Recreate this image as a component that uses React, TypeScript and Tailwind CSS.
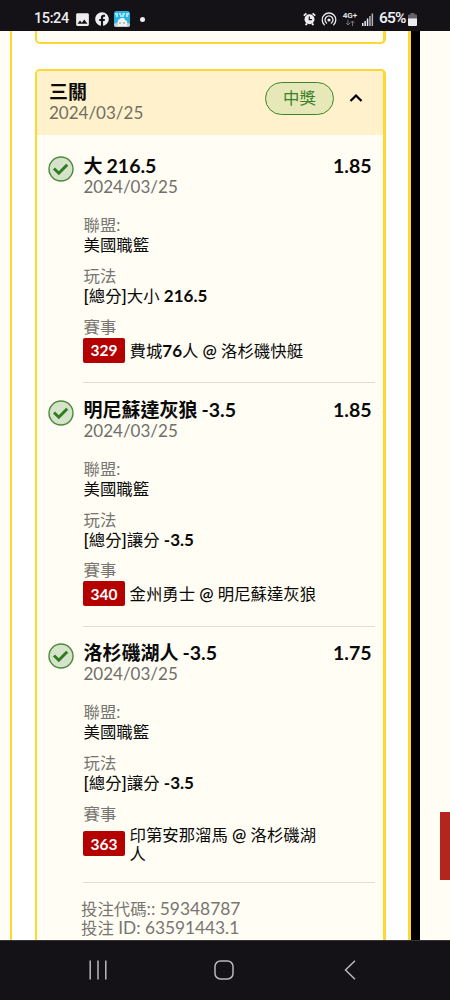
import { FaFacebook } from "react-icons/fa"
import { MdImage } from "react-icons/md"

interface Bet {
  title: string
  line: string
  odds: string
  date: string
  league: string
  play: string
  code: string
  match: string
}

const bets: Bet[] = [
  { title: "大", line: "216.5", odds: "1.85", date: "2024/03/25", league: "美國職籃", play: "[總分]大小 216.5", code: "329", match: "費城76人 @ 洛杉磯快艇" },
  { title: "明尼蘇達灰狼", line: "-3.5", odds: "1.85", date: "2024/03/25", league: "美國職籃", play: "[總分]讓分 -3.5", code: "340", match: "金州勇士 @ 明尼蘇達灰狼" },
  { title: "洛杉磯湖人", line: "-3.5", odds: "1.75", date: "2024/03/25", league: "美國職籃", play: "[總分]讓分 -3.5", code: "363", match: "印第安那溜馬 @ 洛杉磯湖人" },
]

// Latin runs are heavier than the Chinese text around them, numbers most of all
function Mixed({ text }: { text: string }) {
  return (
    <>
      {text.split(/([\x21-\x7e]+)/).map((part, i) => {
        if (i % 2 === 0) return part
        const weight = /\d/.test(part) ? "font-bold" : "font-semibold"
        return <span key={i} className={`text-[17px] leading-none ${weight}`}>{part}</span>
      })}
    </>
  )
}

function StatusBar() {
  return (
    <header className="flex h-[31px] shrink-0 items-center bg-[#141117] pt-[7px] pr-[33px] pl-[34px] text-[#ededf0]">
      <span className="w-[41px] font-['Roboto',sans-serif] text-[14.500px] leading-none font-medium tracking-[-0.400px]">15:24</span>
      <MdImage size={17} className="-ml-[1px]" />
      <FaFacebook size={14} className="ml-[4px]" />
      <svg width="16" height="16" viewBox="0 0 16 16" className="ml-[5px]">
        <rect width="16" height="16" rx="2.5" fill="#28b5e3" />
        <path d="M1 3h3M5 3h2M8.500 3h2.500M12 3h3M2 5h2M6 5h4M12 5h2" stroke="#d8f4fb" strokeWidth="1.300" />
        <path d="M0 13l4-2h8l4 2v.5A2.500 2.500 0 0 1 13.500 16h-11A2.500 2.500 0 0 1 0 13.500z" fill="#c9cfd0" />
        <path d="M4 9l2-1 1-1h3l1 2 2 1v5H3.500z" fill="#f1f3f2" />
        <path d="M5 12h2M9 12h2" stroke="#859398" />
      </svg>
      <span className="ml-[10px] size-[5px] rounded-full bg-[#ededf0]" />
      <div className="ml-auto flex items-center">
        <svg width="13" height="14" viewBox="0 0 13 14" fill="none">
          <circle cx="6.500" cy="7.300" r="5" fill="#ededf0" />
          <path d="M.8 3.600 3.400 1.300M12.200 3.600 9.600 1.300M2.500 13l1.500-1.500M10.500 13 9 11.500" stroke="#ededf0" strokeWidth="1.800" />
          <path d="M6.300 4.500v3.200H9" stroke="#141117" strokeWidth="1.200" />
        </svg>
        <svg width="16" height="14" viewBox="0 0 16 14" fill="none" stroke="#ededf0" strokeWidth="1.300" strokeLinecap="round" className="ml-[5px]">
          <circle cx="8" cy="8" r="1.600" fill="#ededf0" stroke="none" />
          <path d="M5.600 11.100a4 4 0 1 1 4.800 0" />
          <path d="M3.300 12.700a6.800 6.800 0 1 1 9.400 0" />
        </svg>
        <div className="ml-[6px] flex w-[14px] flex-col items-center">
          <span className="font-['Roboto',sans-serif] text-[8px] leading-[8px] font-semibold">4G+</span>
          <svg width="10" height="6" viewBox="0 0 10 6" fill="none" stroke="#77757b">
            <path d="M3 0v5M1 3l2 2 2-2M7.500 6V1M5.500 3l2-2 2 2" />
          </svg>
        </div>
        <svg width="12" height="13" viewBox="0 0 12 13" className="ml-[5px]" fill="#ededf0">
          <rect x="0" y="10" width="1.500" height="3" />
          <rect x="2.400" y="8" width="1.500" height="5" />
          <rect x="4.800" y="5.500" width="1.500" height="7.500" />
          <rect x="7.200" y="3" width="1.500" height="10" fill="#b4b3b7" />
          <rect x="9.600" y="0.500" width="1.500" height="12.500" fill="#b4b3b7" />
        </svg>
        <span className="ml-[5px] w-[29px] font-['Roboto',sans-serif] text-[15.500px] leading-none font-semibold tracking-[-0.900px]">65%</span>
        <svg width="9" height="13" viewBox="0 0 9 13">
          <path d="M2.500 0h4v1.500H8a1 1 0 0 1 1 1V6H0V2.500a1 1 0 0 1 1-1h1.500z" fill="#66646a" />
          <path d="M0 5.500h9V12a1 1 0 0 1-1 1H1a1 1 0 0 1-1-1z" fill="#ededf0" />
        </svg>
      </div>
    </header>
  )
}

function CheckIcon() {
  return (
    <svg width="26" height="26" viewBox="0 0 26 26" fill="none" className="mt-[16.500px] shrink-0">
      <circle cx="13" cy="13" r="12" fill="#d5e3cb" stroke="#4b8a3c" strokeWidth="1.400" />
      <path d="M6 12.500l4.800 4.700 8.400-8.400" stroke="#2f7d1e" strokeWidth="3" />
    </svg>
  )
}

function BetRow({ bet }: { bet: Bet }) {
  return (
    <div className="flex pr-[8px] pl-[11px]">
      <CheckIcon />
      <div className="ml-[9px] flex-1 border-b border-[#dfddd6] pt-[14.500px] pb-[19.500px] text-[16.400px]">
        <div className="flex h-[24px] items-center justify-between pr-[3.500px] text-[19px] leading-[24px] font-bold">
          <span className="pl-[0.500px]">
            {bet.title}
            <span className="ml-[4px] text-[19.500px]">{bet.line}</span>
          </span>
          <span className="text-[19.500px]">{bet.odds}</span>
        </div>
        <div className="h-[18px] pl-[0.500px] text-[17px] leading-[17px] text-[#706f6b]">{bet.date}</div>
        <div className="mt-[19px] pl-[0.500px] leading-[20px]">
          <div className="text-[#777672]">聯盟:</div>
          <div>{bet.league}</div>
        </div>
        <div className="mt-[11px] pl-[0.500px] leading-[20px]">
          <div className="text-[#777672]">玩法</div>
          <div className="h-[20px]"><Mixed text={bet.play} /></div>
        </div>
        <div className="mt-[10.500px] leading-[20px]">
          <div className="pl-[0.500px] text-[#777672]">賽事</div>
          <div className="mt-[1px] flex items-center">
            <span className="flex h-[25px] w-[42px] shrink-0 items-center justify-center rounded-[2px] bg-[#b50000] text-[15.500px] font-bold text-white">
              {bet.code}
            </span>
            <span className="ml-[4.500px] w-[196px] leading-[19px]"><Mixed text={bet.match} /></span>
          </div>
        </div>
      </div>
    </div>
  )
}

function BetCard() {
  return (
    <section className="h-[900px] overflow-hidden rounded-[5px] border-2 border-r-3 border-[#fdd835] bg-[#fffdf4]">
      <div className="flex h-[64px] items-center bg-[#fef1cb] pr-[20px] pl-[12px]">
        <div className="-mt-[3px] flex-1">
          <h2 className="text-[19px] leading-[21px] font-bold">三關</h2>
          <div className="text-[17px] leading-[21px] text-[#706f65]">2024/03/25</div>
        </div>
        <span className="-mt-[9px] flex h-[33px] w-[69px] items-center justify-center rounded-full border border-[#3d8430] bg-[#e7e8b8] text-[16.400px] text-[#39802b]">
          中獎
        </span>
        <svg width="14" height="10" viewBox="0 0 14 10" fill="none" stroke="#000" strokeWidth="2.200" className="-mt-[10px] ml-[15px]">
          <path d="M1.500 8 7 2.500 12.500 8" />
        </svg>
      </div>
      <div className="pt-[4.500px]">
        {bets.map((bet) => (
          <BetRow key={bet.code} bet={bet} />
        ))}
      </div>
      <div className="pt-[15.500px] pl-[44px] text-[16.400px] leading-[19px] text-[#777672]">
        <div className="h-[19px]">投注代碼<span className="text-[17.400px] leading-none">:: 59348787</span></div>
        <div className="h-[19px]">投注<span className="text-[17.300px] leading-none"> ID: 63591443.1</span></div>
      </div>
    </section>
  )
}

function NavBar() {
  return (
    <footer className="flex h-[60px] shrink-0 items-center justify-between border-t border-[#34333a] bg-[#141117] pr-[93px] pb-[2px] pl-[88px]">
      <svg width="20" height="20" viewBox="0 0 20 20" stroke="#b9b8bd" strokeWidth="1.500">
        <path d="M2.200.5v19M10 .5v19M17.800.5v19" />
      </svg>
      <svg width="20" height="20" viewBox="0 0 20 20" fill="none" stroke="#b9b8bd" strokeWidth="1.500" className="-ml-[3px]">
        <rect x="1" y="1" width="18" height="18" rx="5.500" />
      </svg>
      <svg width="14" height="20" viewBox="0 0 14 20" fill="none" stroke="#b9b8bd" strokeWidth="1.500">
        <path d="M12 .8 2.500 10l9.500 9.200" />
      </svg>
    </footer>
  )
}

export default function App() {
  return (
    <div className="flex h-[1000px] w-[450px] flex-col overflow-hidden bg-[#fffdf4] font-['Lato','Noto_Sans_CJK_TC',sans-serif] text-[#0a0a0a]">
      <StatusBar />
      <main className="flex min-h-0 flex-1 overflow-hidden">
        <div className="ml-[10px] w-[401px] border-x-2 border-r-3 border-[#fdd835] bg-white pr-[22px] pl-[23px]">
          <div className="mb-[25px] h-[13px] rounded-b-[5px] border-x-2 border-r-3 border-b-2 border-[#fdd835] bg-[#fffdf4]" />
          <BetCard />
        </div>
        <div className="w-[8.500px] bg-black" />
        <div className="flex-1">
          <div className="mt-[781px] ml-auto h-[68px] w-[10px] bg-[#b3261e]" />
        </div>
      </main>
      <NavBar />
    </div>
  )
}
